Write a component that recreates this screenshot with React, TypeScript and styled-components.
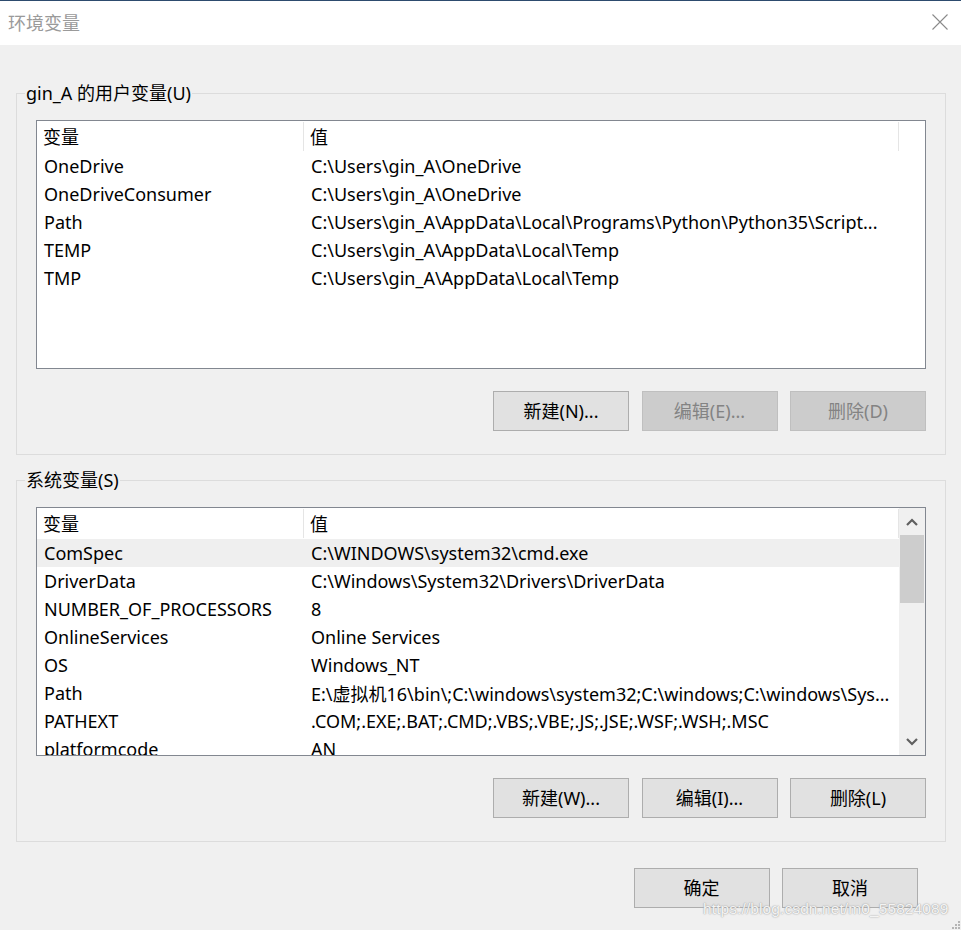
import React from "react";
import styled, { createGlobalStyle } from "styled-components";

const Global = createGlobalStyle`
  html, body { margin: 0; padding: 0; background: #f0f0f0; }
  * { box-sizing: border-box; }
  body { font-family: "Noto Sans", "Noto Sans CJK SC", sans-serif; }
`;

const FONT = `"Noto Sans", "Noto Sans CJK SC", sans-serif`;

const Window = styled.div`
  position: relative;
  width: 961px;
  height: 930px;
  background: #f0f0f0;
  display: flex;
  flex-direction: column;
  overflow: hidden;
  font-family: ${FONT};
  color: #000;
`;

const TitleBar = styled.div`
  height: 45px;
  flex: none;
  background: #fff;
  border-top: 1px solid #2d4b6e;
  display: flex;
  align-items: center;
  justify-content: space-between;
  padding: 0 12px 2px 8px;
`;

const Title = styled.div`
  font-size: 18px;
  color: #9a9a9a;
  font-family: "Noto Sans CJK SC", sans-serif;
`;

const CloseBtn = styled.div`
  width: 18px;
  height: 18px;
  display: flex;
  align-items: center;
  justify-content: center;
`;

const Body = styled.div`
  flex: 1;
  display: flex;
  flex-direction: column;
  padding: 36px 15px 0 16px;
`;

const Group = styled.fieldset<{ $top?: number }>`
  margin: ${(p) => p.$top ?? 0}px 0 0 0;
  border: 1px solid #dcdcdc;
  padding: 0 19px 23px 8px;
  min-width: 0;
`;

const Legend = styled.legend`
  font-size: 18px;
  line-height: 24px;
  padding: 0 1px;
  font-family: ${FONT};
`;

const ListBox = styled.div<{ $mt: number }>`
  margin: ${(p) => p.$mt}px 0 0 11px;
  height: 249px;
  background: #fff;
  border: 1px solid #828790;
  display: flex;
  overflow: hidden;
`;

const ListMain = styled.div`
  flex: 1;
  display: flex;
  flex-direction: column;
  overflow: hidden;
  min-width: 0;
`;

const HeaderRow = styled.div`
  height: 31px;
  flex: none;
  display: flex;
  align-items: stretch;
  font-size: 18px;
`;

const HeaderCell = styled.div<{ $w?: number }>`
  ${(p) => (p.$w ? `width: ${p.$w}px; flex: none;` : "flex: 1;")}
  display: flex;
  align-items: center;
  padding: 0 6px 1px 6px;
  position: relative;
  &::after {
    content: "";
    position: absolute;
    right: 0;
    top: 1px;
    bottom: 1px;
    width: 1px;
    background: #e5e5e5;
  }
`;

const HeaderFill = styled.div`
  flex: 1;
`;

const Row = styled.div<{ $sel?: boolean }>`
  height: 28px;
  flex: none;
  display: flex;
  align-items: center;
  font-size: 18px;
  background: ${(p) => (p.$sel ? "#efefef" : "transparent")};
`;

const Cell = styled.div<{ $w?: number }>`
  ${(p) => (p.$w ? `width: ${p.$w}px; flex: none;` : "flex: 1;")}
  padding: 0 7px 1px 7px;
  white-space: nowrap;
  overflow: hidden;
  text-overflow: ellipsis;
`;

const RowsWrap = styled.div<{ $w?: number }>`
  display: flex;
  flex-direction: column;
  width: ${(p) => (p.$w ? `${p.$w}px` : "auto")};
`;

const ScrollBar = styled.div`
  width: 26px;
  flex: none;
  background: #f0f0f0;
  display: flex;
  flex-direction: column;
  align-items: center;
`;

const ScrollArrow = styled.div`
  height: 27px;
  width: 100%;
  display: flex;
  align-items: center;
  justify-content: center;
  flex: none;
`;

const Thumb = styled.div`
  width: 24px;
  height: 68px;
  background: #cdcdcd;
  flex: none;
`;

const ScrollSpacer = styled.div`
  flex: 1;
`;

const ButtonRow = styled.div<{ $mt: number; $pr?: number }>`
  display: flex;
  justify-content: flex-end;
  gap: 12.5px;
  margin-top: ${(p) => p.$mt}px;
  padding-right: ${(p) => p.$pr ?? 0}px;
`;

const Button = styled.button<{ $disabled?: boolean }>`
  width: 136px;
  height: 40px;
  border: 1px solid ${(p) => (p.$disabled ? "#bfbfbf" : "#adadad")};
  background: ${(p) => (p.$disabled ? "#cccccc" : "#e1e1e1")};
  color: ${(p) => (p.$disabled ? "#838383" : "#000")};
  font-family: ${FONT};
  font-size: 18px;
  padding: 0 0 2px 0;
  margin: 0;
  cursor: default;
`;

const Watermark = styled.div`
  position: absolute;
  left: 703px;
  top: 900px;
  font-family: "Liberation Sans", Arial, sans-serif;
  font-size: 15.5px;
  color: rgba(255, 255, 255, 0.9);
  text-shadow: 0 0 1px #9a9a9a, 0 0 2px #b0b0b0;
  letter-spacing: 0.1px;
  white-space: nowrap;
`;

const Grip = styled.svg`
  position: absolute;
  right: 0;
  bottom: 0;
`;

type Var = [string, string];

const userVars: Var[] = [
  ["OneDrive", "C:\\Users\\gin_A\\OneDrive"],
  ["OneDriveConsumer", "C:\\Users\\gin_A\\OneDrive"],
  ["Path", "C:\\Users\\gin_A\\AppData\\Local\\Programs\\Python\\Python35\\Script..."],
  ["TEMP", "C:\\Users\\gin_A\\AppData\\Local\\Temp"],
  ["TMP", "C:\\Users\\gin_A\\AppData\\Local\\Temp"],
];

const sysVars: Var[] = [
  ["ComSpec", "C:\\WINDOWS\\system32\\cmd.exe"],
  ["DriverData", "C:\\Windows\\System32\\Drivers\\DriverData"],
  ["NUMBER_OF_PROCESSORS", "8"],
  ["OnlineServices", "Online Services"],
  ["OS", "Windows_NT"],
  ["Path", "E:\\虚拟机16\\bin\\;C:\\windows\\system32;C:\\windows;C:\\windows\\Sys..."],
  ["PATHEXT", ".COM;.EXE;.BAT;.CMD;.VBS;.VBE;.JS;.JSE;.WSF;.WSH;.MSC"],
  ["platformcode", "AN"],
];

const Header: React.FC<{ fill?: boolean }> = ({ fill }) => (
  <HeaderRow>
    <HeaderCell $w={267}>变量</HeaderCell>
    <HeaderCell $w={595}>值</HeaderCell>
    {fill && <HeaderFill />}
  </HeaderRow>
);

const Rows: React.FC<{ vars: Var[]; sel?: number }> = ({ vars, sel }) => (
  <RowsWrap $w={862}>
    {vars.map(([k, v], i) => (
      <Row key={k + i} $sel={i === sel}>
        <Cell $w={267}>{k}</Cell>
        <Cell $w={595}>{v}</Cell>
      </Row>
    ))}
  </RowsWrap>
);

const Chevron: React.FC<{ up?: boolean }> = ({ up }) => (
  <svg width="12" height="8" viewBox="0 0 12 8">
    <path
      d={up ? "M1 7 L6 2 L11 7" : "M1 1 L6 6 L11 1"}
      fill="none"
      stroke="#606060"
      strokeWidth="2.2"
    />
  </svg>
);

export default function App() {
  return (
    <Window>
      <Global />
      <TitleBar>
        <Title>环境变量</Title>
        <CloseBtn>
          <svg width="16" height="16" viewBox="0 0 16 16">
            <path d="M0.5 0.5 L15.5 15.5 M15.5 0.5 L0.5 15.5" stroke="#8a8a8a" strokeWidth="1.1" />
          </svg>
        </CloseBtn>
      </TitleBar>
      <Body>
        <Group>
          <Legend>gin_A 的用户变量(U)</Legend>
          <ListBox $mt={15}>
            <ListMain>
              <Header fill />
              <Rows vars={userVars} />
            </ListMain>
          </ListBox>
          <ButtonRow $mt={22}>
            <Button>新建(N)...</Button>
            <Button $disabled>编辑(E)...</Button>
            <Button $disabled>删除(D)</Button>
          </ButtonRow>
        </Group>
        <Group $top={13}>
          <Legend>系统变量(S)</Legend>
          <ListBox $mt={15}>
            <ListMain>
              <Header />
              <Rows vars={sysVars} sel={0} />
            </ListMain>
            <ScrollBar>
              <ScrollArrow>
                <Chevron up />
              </ScrollArrow>
              <Thumb />
              <ScrollSpacer />
              <ScrollArrow>
                <Chevron />
              </ScrollArrow>
            </ScrollBar>
          </ListBox>
          <ButtonRow $mt={22}>
            <Button>新建(W)...</Button>
            <Button>编辑(I)...</Button>
            <Button>删除(L)</Button>
          </ButtonRow>
        </Group>
        <ButtonRow $mt={26} $pr={28}>
          <Button>确定</Button>
          <Button>取消</Button>
        </ButtonRow>
      </Body>
      <Watermark>https://blog.csdn.net/m0_55824089</Watermark>
      <Grip width="12" height="12" viewBox="0 0 12 12">
        {[
          [9, 3],
          [6, 6],
          [9, 6],
          [3, 9],
          [6, 9],
          [9, 9],
        ].map(([x, y]) => (
          <rect key={`${x}-${y}`} x={x} y={y} width="2" height="2" fill="#b5b5b5" />
        ))}
      </Grip>
    </Window>
  );
}
